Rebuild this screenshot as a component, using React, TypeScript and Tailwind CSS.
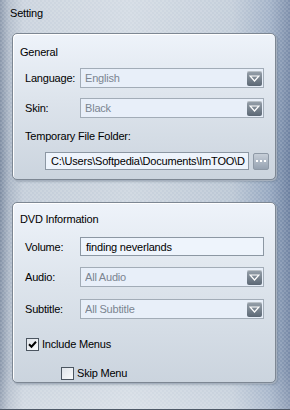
import React from 'react'

const FONT = "font-['Liberation_Sans',Arial,sans-serif]"

function DropButton() {
  return (
    <span className="flex h-[15px] w-[15px] shrink-0 items-center justify-center rounded-[2px] bg-[linear-gradient(#98a2ac,#5c6875)] shadow-[inset_0_1px_0_rgba(255,255,255,0.35)]">
      <svg aria-hidden="true" viewBox="0 0 11 7" className="h-[7px] w-[11px]" fill="none" stroke="#fff" strokeWidth="1.2">
        <path d="M1 1h9L5.5 6z" />
      </svg>
    </span>
  )
}

function Select({ value }: { value: string }) {
  return (
    <div className="flex h-[20px] flex-1 items-center border border-[#a2acb7] bg-[#e8eff9] pl-[4px] pr-[1px] text-[#7b8591]">
      <span className="flex-1 truncate">{value}</span>
      <DropButton />
    </div>
  )
}

function Row({ label, children, className }: { label: string; children: React.ReactNode; className: string }) {
  return (
    <div className={`flex items-center pl-[12px] pr-[11px] ${className}`}>
      <span className="w-[55px] shrink-0">{label}</span>
      {children}
    </div>
  )
}

function Panel({ children, className }: { children: React.ReactNode; className: string }) {
  return (
    <div className={`ml-[12px] mr-[14px] flex flex-col rounded-[5px] border border-[#7d8793] bg-[linear-gradient(#eef3fa,#dde4ec_45%,#cbd4de)] shadow-[inset_1px_1px_0_#fff,1px_1px_0_#a4afbd,2px_2px_2px_rgba(60,75,95,0.25)] ${className}`}>
      {children}
    </div>
  )
}

function Check({ checked }: { checked?: boolean }) {
  return (
    <span className="flex h-[13px] w-[13px] shrink-0 items-center justify-center border border-[#4b5560] bg-[linear-gradient(135deg,#dfe4ea,#fafbfc)]">
      {checked ? (
        <svg aria-hidden="true" viewBox="0 0 9 9" className="h-[9px] w-[9px]" fill="none" stroke="#000" strokeWidth="2">
          <path d="M1 4.2 3.5 6.7 8 1.8" />
        </svg>
      ) : null}
    </span>
  )
}

export default function App() {
  return (
    <div
      className={`relative flex h-[410px] w-[290px] flex-col overflow-hidden border-b border-[#4d5866] text-[11px] leading-[14px] tracking-[-0.2px] text-black ${FONT} bg-[repeating-conic-gradient(rgba(255,255,255,0.12)_0_25%,transparent_0_50%),linear-gradient(90deg,#7c8ba1_0,#a7b3c3_3%,#c3cdd9_8%,#ccd5df_45%,#bac6d4_80%,#94a6bf_93%,#6a7e9e_100%)] bg-[length:4px_4px,100%_100%]`}
    >
      <div className="pointer-events-none absolute inset-0 bg-[linear-gradient(rgba(255,255,255,0.15),rgba(255,255,255,0)_40%,rgba(255,255,255,0.1)_90%,rgba(255,255,255,0.25))]" />
      <div className="relative flex h-[33px] items-start pl-[10px] pt-[6px]">Setting</div>

      <Panel className="relative h-[147px] pt-[11px]">
        <div className="pl-[7px]">General</div>
        <Row label="Language:" className="mt-[9px]">
          <Select value="English" />
        </Row>
        <Row label="Skin:" className="mt-[10px]">
          <Select value="Black" />
        </Row>
        <div className="mt-[11px] pl-[12px]">Temporary File Folder:</div>
        <div className="mt-[9px] flex items-center pl-[32px] pr-[6px]">
          <div className="flex h-[18px] flex-1 items-center overflow-hidden whitespace-nowrap border border-[#8c97a3] bg-[#eef4fc] pl-[5px]">
            C:\Users\Softpedia\Documents\ImTOO\D
          </div>
          <span className="ml-[4px] flex h-[17px] w-[16px] items-center justify-center gap-[2px] rounded-[2px] border border-[#8e99a6] bg-[linear-gradient(#c6ced8,#96a2b1)]">
            <span className="h-[2px] w-[2px] bg-white" />
            <span className="h-[2px] w-[2px] bg-white" />
            <span className="h-[2px] w-[2px] bg-white" />
          </span>
        </div>
      </Panel>

      <Panel className="relative mt-[22px] h-[181px] pt-[9px]">
        <div className="pl-[7px]">DVD Information</div>
        <Row label="Volume:" className="mt-[11px]">
          <div className="flex h-[19px] flex-1 items-center border border-[#8c97a3] bg-[#eef4fc] pl-[5px]">finding neverlands</div>
        </Row>
        <Row label="Audio:" className="mt-[11px]">
          <Select value="All Audio" />
        </Row>
        <Row label="Subtitle:" className="mt-[12px]">
          <Select value="All Subtitle" />
        </Row>
        <label className="mt-[18px] flex items-center gap-[3px] pl-[13px]">
          <Check checked />
          Include Menus
        </label>
        <label className="mt-[15px] flex items-center gap-[3px] pl-[48px]">
          <Check />
          Skip Menu
        </label>
      </Panel>
    </div>
  )
}
